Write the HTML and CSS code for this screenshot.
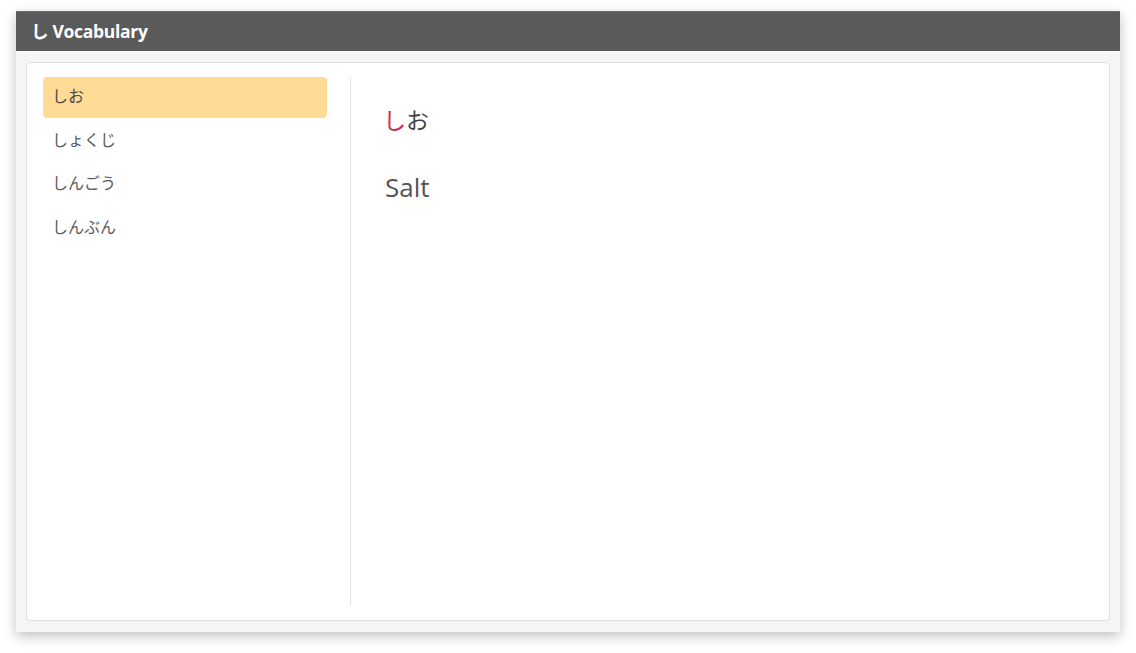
FILE: index.html
```html
<!DOCTYPE html>
<html lang="ja">
<head>
<meta charset="utf-8">
<title>Vocabulary</title>
<link rel="stylesheet" href="styles.css">
</head>
<body>
<div class="window">
  <div class="titlebar">し Vocabulary</div>
  <div class="window-body">
    <div class="card">
      <ul class="word-list">
        <li class="word active">しお</li>
        <li class="word">しょくじ</li>
        <li class="word">しんごう</li>
        <li class="word">しんぶん</li>
      </ul>
      <div class="detail">
        <div class="term"><span class="hl">し</span>お</div>
        <div class="meaning">Salt</div>
      </div>
    </div>
  </div>
</div>
</body>
</html>
```
FILE: styles.css
```css
html, body {
  margin: 0;
  padding: 0;
  background: #ffffff;
}
body {
  padding: 11px 16px 20px 16px;
  font-family: "Open Sans", "Noto Sans CJK JP", sans-serif;
}
.window {
  width: 1104px;
  height: 621px;
  background: #f5f5f5;
  box-shadow: 0 4px 12px rgba(0, 0, 0, 0.25);
  display: flex;
  flex-direction: column;
}
.titlebar {
  height: 40px;
  background: #5a5a5a;
  border-top: 1px solid #6a6a6a;
  box-sizing: border-box;
  color: #ffffff;
  font-weight: 700;
  font-size: 17.5px;
  line-height: 39px;
  padding-left: 15px;
  letter-spacing: -0.3px;
}
.window-body {
  flex: 1;
  padding: 11px 10px 11px 10px;
  display: flex;
}
.card {
  flex: 1;
  background: #ffffff;
  border: 1px solid #dedede;
  border-radius: 4px;
  padding: 14px 0 14px 16px;
  display: flex;
}
.word-list {
  list-style: none;
  margin: 0;
  padding: 0 23px 0 0;
  width: 284px;
  border-right: 1px solid #e2e2e2;
  display: flex;
  flex-direction: column;
  gap: 2.5px;
}
.word {
  height: 41px;
  line-height: 37px;
  padding: 0 9px;
  border-radius: 4px;
  font-family: "Noto Sans CJK JP", sans-serif;
  font-size: 16px;
  color: #5a5a5a;
  font-weight: 400;
}
.word.active {
  background: #ffdb95;
  color: #4a4a4a;
}
.detail {
  padding: 22px 0 0 34px;
}
.term {
  font-family: "Noto Sans CJK JP", sans-serif;
  font-size: 23px;
  line-height: 40px;
  color: #444444;
  margin-left: -2px;
}
.hl {
  color: #d42a52;
}
.meaning {
  margin-top: 31px;
  font-size: 26px;
  line-height: 34px;
  color: #555555;
}
```
